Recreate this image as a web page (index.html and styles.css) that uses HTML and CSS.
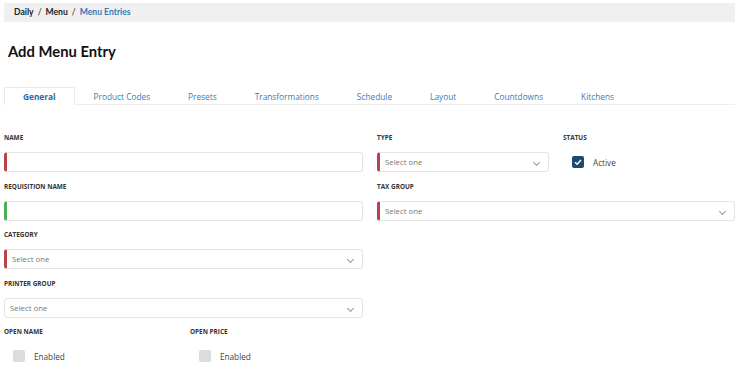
FILE: index.html
```html
<!DOCTYPE html>
<html lang="en">
<head>
<meta charset="UTF-8">
<title>Add Menu Entry</title>
<link rel="stylesheet" href="styles.css">
</head>
<body>
<div class="page">
    <div class="breadcrumb">
        <span>Daily</span><span class="sep">/</span><span>Menu</span><span class="sep">/</span><span class="current">Menu Entries</span>
    </div>
    <h1>Add Menu Entry</h1>
    <ul class="tabs">
        <li class="active">General</li>
        <li>Product Codes</li>
        <li>Presets</li>
        <li>Transformations</li>
        <li>Schedule</li>
        <li>Layout</li>
        <li>Countdowns</li>
        <li>Kitchens</li>
    </ul>
    <div class="form">
        <div class="field">
            <label>Name</label>
            <div class="control required"></div>
        </div>
        <div class="field">
            <label>Type</label>
            <div class="control select required">Select one<span class="chev"></span></div>
        </div>
        <div class="field">
            <label>Status</label>
            <div class="check"><span class="box checked"><svg viewBox="0 0 12 12" width="12" height="12"><path d="M3 6.2 L5.1 8.3 L9 4" fill="none" stroke="#fff" stroke-width="1.4"/></svg></span>Active</div>
        </div>
        <div class="field">
            <label>Requisition Name</label>
            <div class="control valid"></div>
        </div>
        <div class="field wide">
            <label>Tax Group</label>
            <div class="control select required">Select one<span class="chev"></span></div>
        </div>
        <div class="field">
            <label>Category</label>
            <div class="control select required">Select one<span class="chev"></span></div>
        </div>
        <div class="field">
            <label>Printer Group</label>
            <div class="control select">Select one<span class="chev"></span></div>
        </div>
        <div class="field pair">
            <div>
                <label>Open Name</label>
                <div class="check"><span class="box"></span>Enabled</div>
            </div>
            <div>
                <label>Open Price</label>
                <div class="check"><span class="box"></span>Enabled</div>
            </div>
        </div>
    </div>
</div>
</body>
</html>
```
FILE: styles.css
```css
body {
    margin: 0;
    font-family: "Open Sans", Arial, sans-serif;
    color: #333;
    background: #fff;
}
.page {
    padding: 3px 15px 0 4px;
}
.breadcrumb {
    background: #f0f0f0;
    height: 19px;
    line-height: 19px;
    padding-left: 10px;
    font-family: Lato, sans-serif;
    font-weight: bold;
    font-size: 8.6px;
    color: #222;
}
.breadcrumb .sep {
    font-weight: normal;
    margin: 0 4px;
}
.breadcrumb .current {
    color: #3579b5;
}
h1 {
    margin: 19px 0 0 4px;
    font-family: Lato, sans-serif;
    font-size: 14.8px;
    line-height: 20px;
    color: #111;
}
.tabs {
    list-style: none;
    margin: 26px 0 0 0;
    padding: 0;
    display: flex;
    border-bottom: 1px solid #eee;
    height: 17px;
}
.tabs li {
    padding: 0 18px;
    font-size: 8.3px;
    line-height: 17px;
    color: #3d7ab3;
    border: 1px solid transparent;
    border-bottom: none;
}
.tabs li.active {
    font-weight: bold;
    color: #2d6aa3;
    border-color: #e8e8e8;
    border-radius: 2px 2px 0 0;
    background: #fff;
    height: 17px;
}
.form {
    display: grid;
    grid-template-columns: 359px 172px 1fr;
    column-gap: 14px;
    margin-top: 28px;
}
.field {
    padding-bottom: 9.5px;
}
.field.wide {
    grid-column: 2 / 4;
}
.field.pair,
.field:nth-child(6),
.field:nth-child(7) {
    grid-column: 1;
}
.field.pair {
    display: grid;
    grid-template-columns: 172px 172px;
    column-gap: 14px;
}
label {
    display: block;
    font-size: 6.4px;
    font-weight: bold;
    text-transform: uppercase;
    line-height: 10px;
    margin-bottom: 9px;
    color: #333;
}
.control {
    box-sizing: border-box;
    height: 20px;
    border: 1px solid #e4e4e4;
    border-radius: 3px;
    position: relative;
    font-size: 7.8px;
    line-height: 18px;
    color: #777;
    padding-left: 5px;
}
.control.required {
    border-left: 3px solid #b8434a;
}
.control.valid {
    border-left: 3px solid #4cae52;
}
.chev {
    position: absolute;
    right: 9px;
    top: 7px;
    width: 4px;
    height: 4px;
    border-right: 1px solid #999;
    border-bottom: 1px solid #999;
    transform: rotate(45deg);
}
.check {
    display: flex;
    align-items: center;
    height: 20px;
    padding-left: 9px;
    font-size: 8.2px;
    color: #444;
}
.box {
    width: 12px;
    height: 12px;
    border-radius: 2px;
    background: #dcdcdc;
    margin-right: 9px;
    display: flex;
}
.box.checked {
    background: #1f4a70;
}
```
